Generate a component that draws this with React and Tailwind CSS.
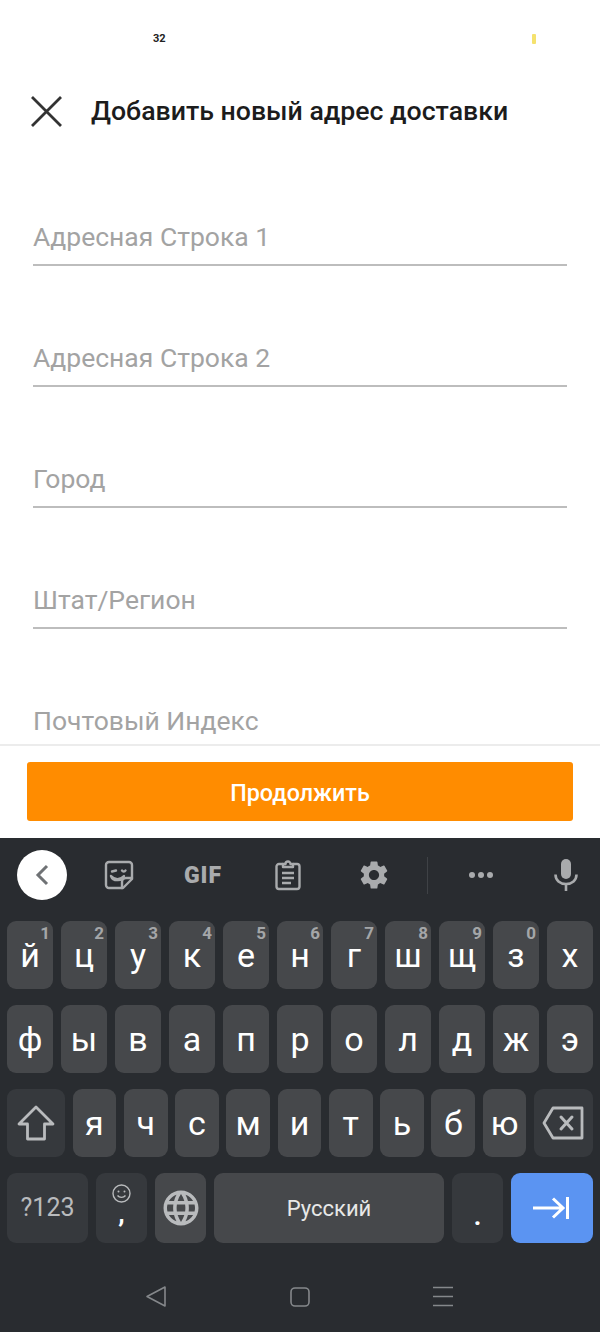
import React from 'react';
import { MdSettings, MdLanguage } from 'react-icons/md';

const fields = ['Адресная Строка 1', 'Адресная Строка 2', 'Город', 'Штат/Регион', 'Почтовый Индекс'];

const row1 = [['й', '1'], ['ц', '2'], ['у', '3'], ['к', '4'], ['е', '5'], ['н', '6'], ['г', '7'], ['ш', '8'], ['щ', '9'], ['з', '0'], ['х']];
const row2 = ['ф', 'ы', 'в', 'а', 'п', 'р', 'о', 'л', 'д', 'ж', 'э'];
const row3 = ['я', 'ч', 'с', 'м', 'и', 'т', 'ь', 'б', 'ю'];

function LetterKey({ label, hint, className = 'w-[46px]' }) {
  return (
    <div className={`relative flex h-[68px] items-center justify-center rounded-[9px] bg-[#46484b] text-[34px] leading-none text-white ${className}`}>
      {label}
      {hint && <span className="absolute right-[3px] top-[2px] text-[17px] font-bold leading-[20px] text-[#a4a6a8]">{hint}</span>}
    </div>
  );
}

function StickerIcon() {
  return (
    <svg width="30" height="30" viewBox="0 0 30 30" fill="none" stroke="#a9abad" strokeWidth="2.4" strokeLinejoin="round" strokeLinecap="round">
      <path d="M5 2h20a3 3 0 0 1 3 3v14l-9 9H5a3 3 0 0 1-3-3V5a3 3 0 0 1 3-3z" />
      <path d="M28 18h-6a4 4 0 0 0-4 4v6" />
      <path d="M8 11.5l4-1" />
      <path d="M18 10.5a2 2 0 0 0 3.5 0" />
      <path d="M7 16c4 4 9 4 13 0-1 5-11 6-13 0z" fill="#a9abad" />
    </svg>
  );
}

function ClipboardIcon() {
  return (
    <svg width="26" height="32" viewBox="0 0 26 32" fill="none" stroke="#a9abad" strokeWidth="2.4" strokeLinejoin="round">
      <path d="M8 5H4a2.5 2.5 0 0 0-2.5 2.5v20A2.5 2.5 0 0 0 4 30h18a2.5 2.5 0 0 0 2.5-2.5v-20A2.5 2.5 0 0 0 22 5h-4" />
      <path d="M8 8V5h2.5a2.5 2.5 0 0 1 5 0H18v3z" />
      <path d="M7 14h12M7 19h12M7 24h9" />
    </svg>
  );
}

function MicIcon() {
  return (
    <svg width="24" height="32" viewBox="0 0 24 32" fill="none">
      <rect x="7" y="0" width="10" height="20" rx="5" fill="#a9abad" />
      <path d="M1.5 15.5c0 6 4.5 9.5 10.5 9.5s10.5-3.500 10.500-9.500" stroke="#a9abad" strokeWidth="2.600" />
      <path d="M12 24v8" stroke="#a9abad" strokeWidth="2.600" />
    </svg>
  );
}

function ShiftIcon() {
  return (
    <svg width="38" height="36" viewBox="0 0 38 36" fill="none" stroke="#b9bbbd" strokeWidth="2.800" strokeLinejoin="round">
      <path d="M19 2L2 19h8.500v15h17V19H36z" />
    </svg>
  );
}

function BackspaceIcon() {
  return (
    <svg width="42" height="34" viewBox="0 0 42 34" fill="none" stroke="#b9bbbd" strokeWidth="2.800" strokeLinejoin="round">
      <path d="M11 2h29v30H11L2 17z" />
      <path d="M19 11l11 12M30 11L19 23" strokeLinecap="round" strokeWidth="3" />
    </svg>
  );
}

function EnterIcon() {
  return (
    <svg width="36" height="22" viewBox="0 0 36 22" fill="none" stroke="#fff" strokeWidth="3">
      <path d="M0 11h29M20 1.500l10 9.500-10 9.500" />
      <path d="M34.500 0v22" strokeWidth="3" />
    </svg>
  );
}

function App() {
  return (
    <div className="flex h-[1332px] w-[600px] flex-col overflow-hidden bg-white font-['Roboto',sans-serif]">
      {/* status bar */}
      <div className="flex h-[77px] shrink-0 items-center">
        <span className="ml-[153px] w-[14px] text-[11px] font-bold leading-none text-[#222]">32</span>
        <span className="ml-[365px] h-[10px] w-[4px] rounded-[1px] bg-[#f5e26e]" />
      </div>

      {/* header */}
      <div className="flex h-[68px] shrink-0 items-center pl-[30px]">
        <svg width="33" height="31" viewBox="0 0 33 31" fill="none" stroke="#333" strokeWidth="2.800">
          <path d="M2 1l29 29M31 1L2 30" />
        </svg>
        <h1 className="ml-[28px] text-[26.700px] font-medium leading-none text-[#1c1c1c]">Добавить новый адрес доставки</h1>
      </div>

      {/* address form */}
      <div className="h-[599px] shrink-0 overflow-hidden px-[33px]">
        {fields.map((f) => (
          <div key={f} className="flex h-[121px] items-end border-b-2 border-[#bdbdbd] pb-[10px]">
            <span className="text-[26.500px] leading-[34px] text-[#a3a3a3]">{f}</span>
          </div>
        ))}
      </div>

      {/* continue button */}
      <div className="h-[94px] shrink-0 border-t-2 border-[#ececec] px-[27px] pt-[16px]">
        <button className="flex h-[59px] w-full items-center justify-center rounded-[3px] bg-[#ff8c00] pt-[3px] text-[23.300px] font-medium text-white">
          Продолжить
        </button>
      </div>

      {/* keyboard */}
      <div className="flex flex-1 flex-col bg-[#292c30]">
        <div className="flex h-[83px] shrink-0 items-center pb-[9px]">
          <div className="ml-[17px] flex h-[50px] w-[50px] items-center justify-center rounded-full bg-white">
            <svg width="14" height="22" viewBox="0 0 14 22" fill="none" stroke="#6f7275" strokeWidth="3">
              <path d="M12 2L3 11l9 9" />
            </svg>
          </div>
          <div className="ml-[10px] flex w-[84px] justify-center"><StickerIcon /></div>
          <div className="flex w-[84px] justify-center text-[23px] font-black leading-none tracking-[1px] text-[#a9abad]">GIF</div>
          <div className="flex w-[86px] justify-center"><ClipboardIcon /></div>
          <div className="flex w-[86px] justify-center"><MdSettings size={34} color="#a9abad" /></div>
          <div className="ml-[10px] h-[37px] w-px bg-[#3f4246]" />
          <div className="flex w-[106px] justify-center gap-[3px]">
            <span className="h-[6px] w-[6px] rounded-full bg-[#a9abad]" />
            <span className="h-[6px] w-[6px] rounded-full bg-[#a9abad]" />
            <span className="h-[6px] w-[6px] rounded-full bg-[#a9abad]" />
          </div>
          <div className="flex w-[64px] justify-center"><MicIcon /></div>
        </div>

        <div className="flex flex-col gap-4 pl-[7px] pr-[7px]">
          <div className="flex gap-2">
            {row1.map(([l, h]) => <LetterKey key={l} label={l} hint={h} />)}
          </div>
          <div className="flex gap-2">
            {row2.map((l) => <LetterKey key={l} label={l} />)}
          </div>
          <div className="flex gap-[7.600px]">
            <div className="flex h-[68px] w-[58px] items-center justify-center rounded-[9px] bg-[#36393d]"><ShiftIcon /></div>
            {row3.map((l) => <LetterKey key={l} label={l} className="flex-1" />)}
            <div className="flex h-[68px] w-[59px] items-center justify-center rounded-[9px] bg-[#36393d]"><BackspaceIcon /></div>
          </div>
          <div className="flex h-[70px] gap-2">
            <div className="flex w-[81px] items-center justify-center rounded-[9px] bg-[#36393d] text-[25px] text-[#b9bbbd]">?123</div>
            <div className="flex w-[51px] flex-col items-center rounded-[9px] bg-[#36393d] pt-[11px]">
              <svg width="19" height="19" viewBox="0 0 19 19" fill="none" stroke="#b9bbbd" strokeWidth="1.400">
                <circle cx="9.500" cy="9.500" r="8.500" />
                <circle cx="6.500" cy="7.500" r="1" fill="#b9bbbd" stroke="none" />
                <circle cx="12.500" cy="7.500" r="1" fill="#b9bbbd" stroke="none" />
                <path d="M5.500 11.500c2 2.500 6 2.500 8 0" />
              </svg>
              <span className="mt-[-3px] text-[26px] font-bold leading-[26px] text-white">,</span>
            </div>
            <div className="flex w-[51px] items-center justify-center rounded-[9px] bg-[#46484b]"><MdLanguage size={42} color="#b9bbbd" /></div>
            <div className="flex w-[230px] items-center justify-center rounded-[9px] bg-[#46484b] text-[22px] text-[#e8e8e8]">Русский</div>
            <div className="flex w-[51px] items-end justify-center rounded-[9px] bg-[#36393d] pb-[14px] text-[26px] font-bold leading-none text-white">.</div>
            <div className="flex w-[82px] items-center justify-center rounded-[9px] bg-[#5b94f2] pr-[2px]"><EnterIcon /></div>
          </div>
        </div>

        {/* nav bar */}
        <div className="flex flex-1 items-center pl-[146px] pt-[18px]">
          <svg width="20" height="21" viewBox="0 0 20 21" fill="none" stroke="#85888b" strokeWidth="1.600" strokeLinejoin="round">
            <path d="M19 1v19L1 10.500z" />
          </svg>
          <svg className="ml-[124px]" width="20" height="20" viewBox="0 0 20 20" fill="none" stroke="#85888b" strokeWidth="1.600">
            <rect x="1" y="1" width="18" height="18" rx="4" />
          </svg>
          <svg className="ml-[122px]" width="22" height="21" viewBox="0 0 22 21" fill="none" stroke="#85888b" strokeWidth="1.600">
            <path d="M1 1.500h20M1 10.500h20M1 19.500h20" />
          </svg>
        </div>
      </div>
    </div>
  );
}

export default App;
